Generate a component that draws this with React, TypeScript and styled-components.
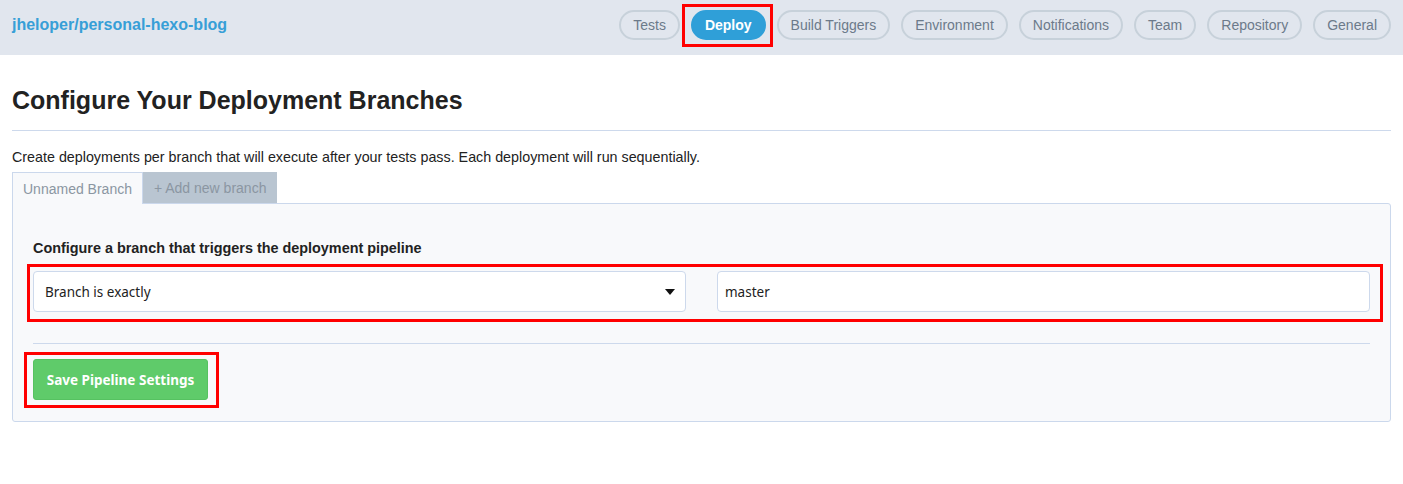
import * as React from 'react';
import styled, { createGlobalStyle } from 'styled-components';

const GlobalStyle = createGlobalStyle`
	body {
		margin: 0;
		background: #fff;
		font-family: "Liberation Sans", Arial, sans-serif;
		color: #222;
	}
`;

const Header = styled.header`
	height: 55px;
	background: #e1e6ee;
	display: flex;
	align-items: flex-start;
	justify-content: space-between;
	padding: 10px 12px 15px;
	box-sizing: border-box;
`;

const RepoName = styled.a`
	font-size: 16px;
	line-height: 30px;
	font-weight: bold;
	color: #379fd7;
	text-decoration: none;
`;

const Nav = styled.nav`
	display: flex;
	gap: 11px;
	align-items: center;
`;

/* Red annotation box drawn over a piece of the page */
const Marked = styled.div<{ $t: number; $r: number; $b: number; $l: number }>`
	position: relative;
	&::after {
		content: '';
		position: absolute;
		top: ${p => -p.$t}px;
		right: ${p => -p.$r}px;
		bottom: ${p => -p.$b}px;
		left: ${p => -p.$l}px;
		border: 3px solid #f00;
		pointer-events: none;
	}
`;

const Pill = styled.button<{ $active?: boolean }>`
	height: 30px;
	padding: 0 12px;
	border-radius: 15px;
	font-family: inherit;
	font-size: 14px;
	box-sizing: border-box;
	display: flex;
	align-items: center;
	border: 2px solid ${p => (p.$active ? '#2f9fd8' : '#c7d1da')};
	background: ${p => (p.$active ? '#2f9fd8' : 'transparent')};
	color: ${p => (p.$active ? '#fff' : '#6c7a8a')};
	font-weight: ${p => (p.$active ? 'bold' : 'normal')};
`;

const Main = styled.main`
	padding: 0 12px;
`;

const Title = styled.h1`
	margin: 31px 0 0;
	font-size: 25px;
	line-height: 28px;
	font-weight: bold;
	color: #222;
`;

const Rule = styled.hr`
	border: 0;
	border-top: 1px solid #cdd9ec;
	margin: 16px 0 0;
`;

const Intro = styled.p`
	font-size: 14.3px;
	line-height: 16px;
	margin: 18px 0 0;
	color: #222;
`;

const Tabs = styled.div`
	display: flex;
	margin-top: 7px;
`;

const Tab = styled.div<{ $active?: boolean }>`
	box-sizing: border-box;
	display: flex;
	align-items: center;
	font-size: 14px;
	padding: 0 10px;
	color: #8b96a2;
	background: ${p => (p.$active ? '#f8f9fb' : '#b9c5d1')};
	border: 1px solid ${p => (p.$active ? '#cbd8ec' : '#b9c5d1')};
	border-bottom: 0;
	position: relative;
	z-index: ${p => (p.$active ? 1 : 0)};
	margin-bottom: ${p => (p.$active ? '-1px' : '0')};
	height: ${p => (p.$active ? '32px' : '31px')};
`;

const Panel = styled.section`
	background: #f8f9fb;
	border: 1px solid #cbd8ec;
	border-radius: 0 3px 3px 3px;
	padding: 36px 20px 21px;
`;

const Label = styled.div`
	font-size: 14.4px;
	line-height: 16px;
	font-weight: bold;
	color: #222;
	margin-bottom: 15px;
`;

const FieldRow = styled.div`
	display: grid;
	grid-template-columns: 1fr 1fr;
	gap: 31px;
`;

const Field = styled.div<{ $select?: boolean }>`
	height: 41px;
	box-sizing: border-box;
	background: #fff;
	border: 1px solid #cdd9ec;
	border-radius: 4px;
	display: flex;
	align-items: center;
	justify-content: space-between;
	padding: ${p => (p.$select ? '0 10px 0 11px' : '0 8px 0 7px')};
	font-family: "Noto Sans", "DejaVu Sans", sans-serif;
	font-size: 13.5px;
	color: #222;
`;

const Caret = styled.span`
	width: 0;
	height: 0;
	border-left: 5px solid transparent;
	border-right: 5px solid transparent;
	border-top: 6px solid #111;
`;

const Divider = styled.hr`
	border: 0;
	border-top: 1px solid #cdd9ec;
	margin: 31px 0 15px;
`;

const ButtonWrap = styled.div`
	display: flex;
`;

const SaveButton = styled.button`
	height: 41px;
	width: 175px;
	background: #5fcb6a;
	border: 1px solid #56c261;
	border-radius: 3px;
	color: #fff;
	font-family: "Noto Sans", "DejaVu Sans", sans-serif;
	font-size: 13.5px;
	font-weight: bold;
`;

const tabs = ['Tests', 'Deploy', 'Build Triggers', 'Environment', 'Notifications', 'Team', 'Repository', 'General'];

export default function App() {
	return (
		<>
			<GlobalStyle />
			<Header>
				<RepoName href="#">jheloper/personal-hexo-blog</RepoName>
				<Nav>
					{tabs.map(t =>
						t === 'Deploy' ? (
							<Marked key={t} $t={6} $r={7} $b={7} $l={9}>
								<Pill $active>{t}</Pill>
							</Marked>
						) : (
							<Pill key={t}>{t}</Pill>
						)
					)}
				</Nav>
			</Header>
			<Main>
				<Title>Configure Your Deployment Branches</Title>
				<Rule />
				<Intro>Create deployments per branch that will execute after your tests pass. Each deployment will run sequentially.</Intro>
				<Tabs>
					<Tab $active>Unnamed Branch</Tab>
					<Tab>+ Add new branch</Tab>
				</Tabs>
				<Panel>
					<Label>Configure a branch that triggers the deployment pipeline</Label>
					<Marked $t={7} $r={13} $b={10} $l={6}>
						<FieldRow>
							<Field $select>
								<span>Branch is exactly</span>
								<Caret />
							</Field>
							<Field>master</Field>
						</FieldRow>
					</Marked>
					<Divider />
					<ButtonWrap>
						<Marked $t={7} $r={11} $b={8} $l={9}>
							<SaveButton>Save Pipeline Settings</SaveButton>
						</Marked>
					</ButtonWrap>
				</Panel>
			</Main>
		</>
	);
}
